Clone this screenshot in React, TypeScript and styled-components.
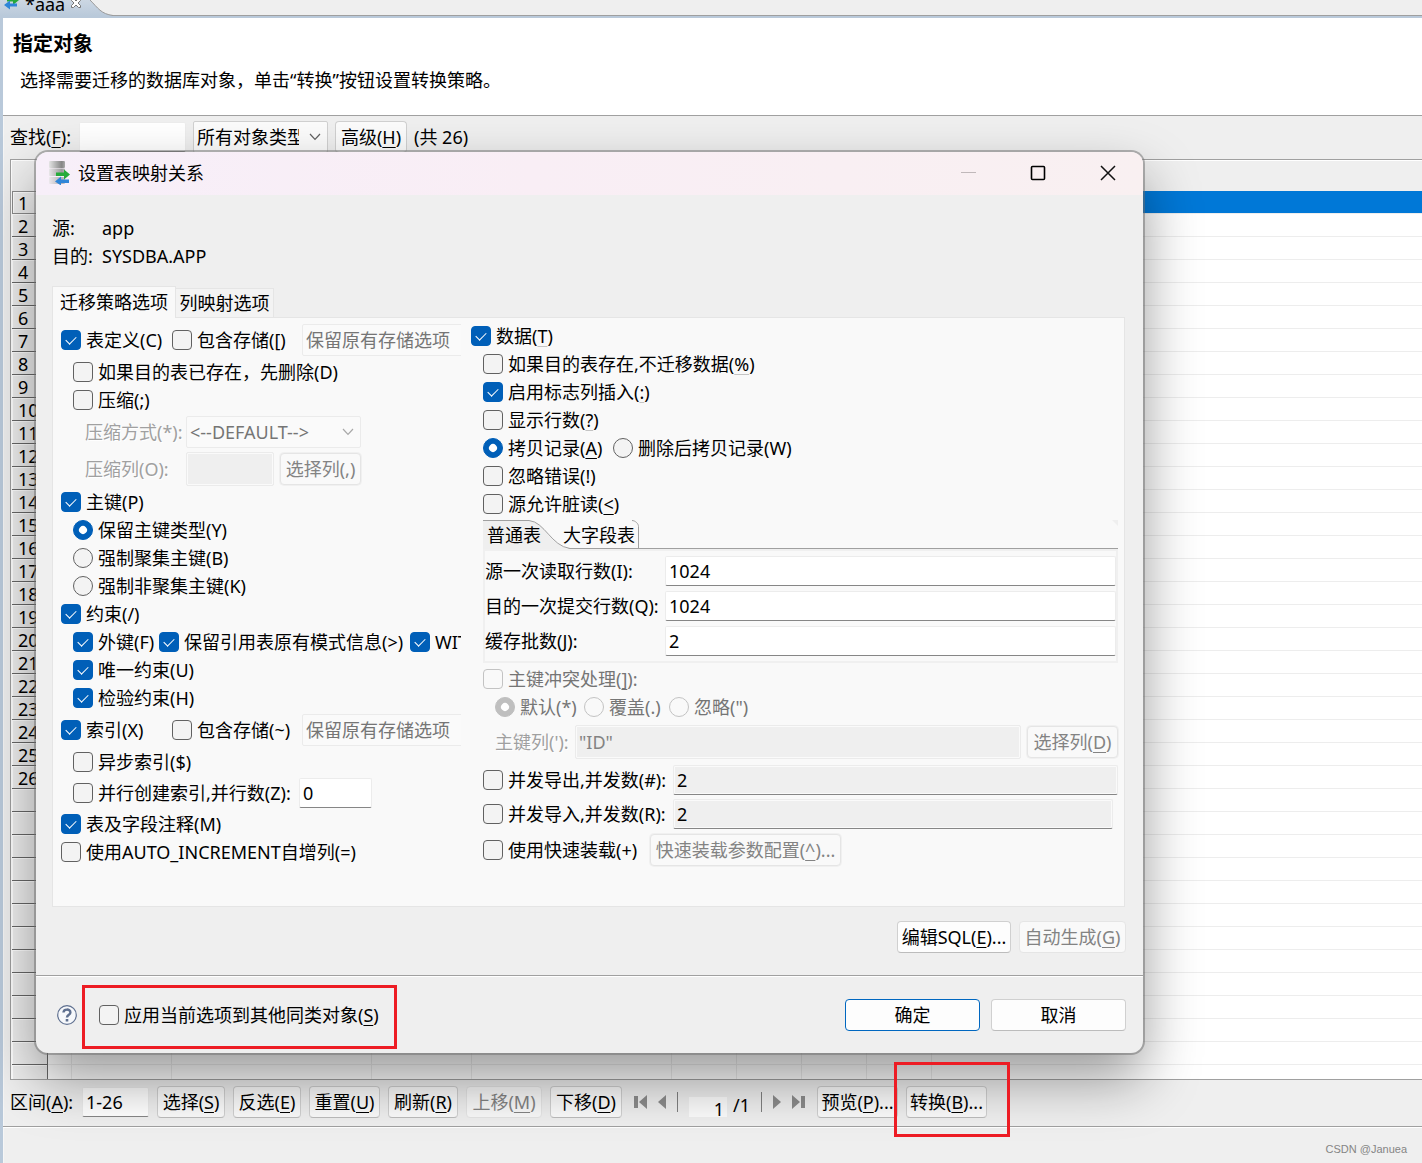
import React, { useId } from "react";
import styled, { createGlobalStyle, css } from "styled-components";

const font = '"Noto Sans", "Noto Sans CJK SC", sans-serif';

const Global = createGlobalStyle`
  *, *::before, *::after { box-sizing: border-box; }
  body { margin: 0; background: #efefef; }
  body, button, input, select { font-family: ${font}; font-size: 18px; line-height: 24px; color: #000; }
  body { overflow-x: hidden; }
`;

/* ---------- shared controls ---------- */

const Key = styled.u<{ $faint?: boolean }>`
  text-decoration: underline;
  text-decoration-thickness: 1px;
  text-underline-offset: 3px;
  text-decoration-color: ${(p) => (p.$faint ? "#c4c4c4" : "currentColor")};
`;

/* "&X" marks the accelerator character, "~~X" marks it with a faint line */
function Caption({ text }: { text: string }) {
  const m = text.match(/^(.*?)(&|~~)(.)(.*)$/);
  if (!m) return <>{text}</>;
  return (
    <>
      {m[1]}
      <Key $faint={m[2] === "~~"}>{m[3]}</Key>
      {m[4]}
    </>
  );
}

const Button = styled.button<{ $w?: number; $primary?: boolean; $framed?: boolean }>`
  flex: none;
  display: flex;
  align-items: center;
  justify-content: center;
  width: ${(p) => (p.$w ? `${p.$w}px` : "auto")};
  height: 32px;
  padding: 0;
  white-space: nowrap;
  background: #fdfdfd;
  border: 1px solid ${(p) => (p.$primary ? "#0067c0" : "#d0d0d0")};
  border-bottom-color: ${(p) => (p.$primary ? "#0067c0" : "#bcbcbc")};
  border-radius: 4px;
  ${(p) => p.$framed && css`box-shadow: 0 0 0 1px #f0f0f0;`}
  &:disabled {
    color: #838383;
    background: #f9f9f9;
    border-color: #e5e5e5;
  }
`;

const BarButton = styled(Button)`
  background: #fbfbfb;
`;

const Field = styled.input<{ $w?: number; $h?: number }>`
  flex: ${(p) => (p.$w ? "none" : "1")};
  width: ${(p) => (p.$w ? `${p.$w}px` : "auto")};
  min-width: 0;
  height: ${(p) => p.$h ?? 30}px;
  padding: 0 3px;
  background: #fff;
  border: 1px solid #ececec;
  border-bottom-color: #868686;
  border-radius: 2px;
  outline: none;
  &:read-only {
    background: #efefef;
    box-shadow: inset 0 0 0 1px #fafafa;
  }
  &:disabled {
    color: #838383;
    background: #efefef;
    border-color: #ebebeb;
    box-shadow: inset 0 0 0 1px #fafafa;
  }
`;

const SelectBox = styled.span<{ $w: number; $h?: number }>`
  position: relative;
  flex: none;
  width: ${(p) => p.$w}px;
  height: ${(p) => p.$h ?? 32}px;
  & > svg {
    position: absolute;
    right: 7px;
    top: 50%;
    margin-top: -4px;
    pointer-events: none;
  }
`;

const Select = styled.select<{ $room: number }>`
  appearance: none;
  width: 100%;
  height: 100%;
  padding: 0 ${(p) => p.$room}px 0 3px;
  background: #fbfbfb;
  border: 1px solid #d0d0d0;
  border-radius: 2px;
  &:disabled {
    color: #757575;
    opacity: 1;
    background: #fafafa;
    border-color: #ebebeb;
  }
`;

function Chevron({ color }: { color: string }) {
  return (
    <svg width="12" height="8" viewBox="0 0 12 8" fill="none" stroke={color} strokeWidth="1.2">
      <path d="M1 1l5 5.4L11 1" />
    </svg>
  );
}

function Dropdown(props: { w: number; label: string; value: string; disabled?: boolean; room?: number }) {
  return (
    <SelectBox $w={props.w}>
      <Select $room={props.room ?? 26} aria-label={props.label} disabled={props.disabled} defaultValue={props.value}>
        <option value={props.value}>{props.value}</option>
      </Select>
      <Chevron color={props.disabled ? "#a8a8a8" : "#606060"} />
    </SelectBox>
  );
}

const ToggleLabel = styled.label<{ $w?: number; $off?: boolean }>`
  flex: none;
  display: flex;
  align-items: center;
  gap: 5px;
  width: ${(p) => (p.$w ? `${p.$w}px` : "auto")};
  white-space: nowrap;
  color: ${(p) => (p.$off ? "#757575" : "#000")};
`;

const Tick = styled.input`
  appearance: none;
  flex: none;
  display: flex;
  align-items: center;
  justify-content: center;
  width: 20px;
  height: 20px;
  margin: 0;
  background: #f3f3f3;
  border: 1px solid #616161;
  border-radius: 4px;
  &:disabled { border-color: #c3c3c3; background: #f9f9f9; }
  &:checked { background: #005fb8; border-color: #005fb8; }
  &:checked::after {
    content: "";
    width: 10px;
    height: 6px;
    margin-top: -3px;
    border: solid #fff;
    border-width: 0 0 1px 1px;
    transform: rotate(-45deg);
  }
`;

const Radio = styled(Tick)`
  border-radius: 50%;
  &:checked::after {
    width: 8px;
    height: 8px;
    margin: 0;
    border: 0;
    border-radius: 50%;
    background: #fff;
  }
  &:checked:disabled { background: #bfbfbf; border-color: #bfbfbf; }
`;

interface ToggleProps {
  text: string;
  w?: number;
  on?: boolean;
  off?: boolean;
}

function Check({ text, w, on, off }: ToggleProps) {
  return (
    <ToggleLabel $w={w} $off={off}>
      <Tick type="checkbox" defaultChecked={on} disabled={off} />
      <span><Caption text={text} /></span>
    </ToggleLabel>
  );
}

function Choice({ text, w, on, off, group }: ToggleProps & { group: string }) {
  return (
    <ToggleLabel $w={w} $off={off}>
      <Radio type="radio" name={group} defaultChecked={on} disabled={off} />
      <span><Caption text={text} /></span>
    </ToggleLabel>
  );
}

const Mark = styled.span<{ $inset: string }>`
  position: absolute;
  inset: ${(p) => p.$inset};
  z-index: 3;
  border: 3px solid #ed1c24;
  pointer-events: none;
`;

const Marked = styled.div`
  position: relative;
  flex: none;
`;

/* ---------- editor page behind the dialog ---------- */

const Page = styled.div`
  position: relative;
  display: flex;
  flex-direction: column;
  min-height: 100vh;
  background: #efefef;
  overflow: hidden;
`;

const TabStrip = styled.div`
  display: flex;
  height: 16px;
  border-bottom: 1px solid #9f9f9f;
  background: #efefef;
`;

const EditorTab = styled.div`
  position: relative;
  display: flex;
  align-items: flex-end;
  gap: 5px;
  width: 114px;
  height: 16px;
  padding: 0 0 0 4px;
  overflow: hidden;
  line-height: 24px;
  & > svg { position: relative; flex: none; }
  & > svg:first-child { position: absolute; left: 0; top: 0; }
  & > span { position: relative; height: 24px; }
`;

const Frame = styled.div`
  flex: 1;
  display: flex;
  flex-direction: column;
  border-left: 3px solid #b9c9da;
  border-top: 2px solid #b9c9da;
  box-shadow: inset 1px 0 0 #f6f6f6;
`;

const Intro = styled.header`
  height: 98px;
  padding: 14px 10px 0;
  background: #fff;
  border-bottom: 1px solid #a0a0a0;
`;

const IntroTitle = styled.h1`
  margin: 0;
  font-size: 20px;
  line-height: 24px;
  font-weight: 700;
`;

const IntroText = styled.p`
  margin: 0;
  padding: 12px 7px 0;
`;

const SearchBar = styled.div`
  display: flex;
  align-items: center;
  gap: 7px;
  height: 43px;
  padding: 0 7px 1px;
`;

const BarLabel = styled.label<{ $w: number }>`
  flex: none;
  width: ${(p) => p.$w}px;
  white-space: nowrap;
`;

const GridBox = styled.div`
  margin-left: 7px;
  height: 921px;
  overflow: hidden;
  background: #fff;
  border: solid #a0a0a0;
  border-width: 1px 0 1px 1px;
`;

const Grid = styled.table`
  width: 100%;
  table-layout: fixed;
  border-spacing: 0;
  border-left: 1px solid #fff;
  th, td { padding: 0; height: 23px; line-height: 20px; font-weight: 400; }
  thead th { height: 31px; background: #efefef; border-top: 1px solid #fff; }
  tbody th {
    padding: 2px 0 0 6px;
    text-align: left;
    background: #efefef;
    border-bottom: 1px solid #686868;
    border-right: 1px solid #686868;
    box-shadow: inset 1px 1px 0 #fff;
    overflow: hidden;
  }
  tbody td { border: solid #ededed; border-width: 0 1px 1px 0; }
  tbody td:last-child { border-right: 0; }
`;

const GridRow = styled.tr<{ $selected?: boolean }>`
  ${(p) => p.$selected && css`
    td { background: #0078d7; border-color: #0078d7; }
    && th { border: 1px solid #8c8c8c; padding: 1px 0 0 5px; }
  `}
`;

const columns = [36, 24, 100, 200, 100, 200, 65, 65, 65, 65];

const PageBar = styled.div`
  display: flex;
  align-items: center;
  gap: 8px;
  height: 47px;
  padding: 0 0 2px 7px;
  border-bottom: 1px solid #a0a0a0;
  box-shadow: 0 1px 0 #fff;
`;

const Pager = styled.div`
  display: flex;
  align-items: center;
  width: 179px;
  height: 32px;
  padding-left: 4px;
  gap: 11px;
`;

const PagerButton = styled.button`
  display: flex;
  padding: 0;
  border: 0;
  background: none;
`;

const Divider = styled.span`
  width: 1px;
  height: 20px;
  background: #808080;
`;

const PageNumber = styled.div`
  display: flex;
  align-items: flex-end;
  gap: 6px;
  padding-top: 6px;
`;

const PageInput = styled(Field)`
  padding: 4px 3px 0;
  border: 0;
  border-radius: 0;
  text-align: right;
  background: #fbfbfb;
`;

const Credit = styled.footer`
  padding: 10px 15px 0;
  text-align: right;
  font-family: "Liberation Sans", sans-serif;
  font-size: 11px;
  line-height: 24px;
  color: #858585;
`;

/* ---------- dialog ---------- */

const Dialog = styled.section`
  position: absolute;
  left: 36px;
  top: 152px;
  z-index: 2;
  width: 1107px;
  background: #efefef;
  border-radius: 12px;
  box-shadow: 0 0 0 2px rgba(110, 110, 110, 0.5), 0 26px 56px rgba(0, 0, 0, 0.4);
`;

const TitleBar = styled.div`
  display: flex;
  align-items: center;
  height: 43px;
  padding: 0 0 2px 13px;
  border-radius: 12px 12px 0 0;
  background: linear-gradient(90deg, #f7eff9, #f9eef5 45%, #f9f0f1);
`;

const DialogTitle = styled.h2`
  flex: 1;
  margin: 0 8px;
  font-size: 18px;
  font-weight: 400;
`;

const WindowButton = styled.button`
  display: flex;
  align-items: center;
  justify-content: center;
  width: 70px;
  height: 41px;
  padding: 0;
  border: 0;
  background: none;
`;

const DialogBody = styled.div`
  padding: 19px 17px 0 16px;
`;

const Facts = styled.dl`
  display: grid;
  grid-template-columns: 50px 1fr;
  grid-auto-rows: 28px;
  align-items: center;
  margin: 0;
  & > dd { margin: 0; }
`;

const Tabs = styled.div`
  display: flex;
  align-items: flex-end;
  height: 47px;
`;

const Tab = styled.button<{ $active?: boolean }>`
  width: ${(p) => (p.$active ? 124 : 98)}px;
  height: ${(p) => (p.$active ? 32 : 29)}px;
  margin-bottom: ${(p) => (p.$active ? -1 : 0)}px;
  padding: 0 0 ${(p) => (p.$active ? 2 : 0)}px;
  background: ${(p) => (p.$active ? "#f9f9f9" : "#f3f3f3")};
  border: 1px solid #e5e5e5;
  border-bottom: 0;
  ${(p) => !p.$active && css`border-left: 0;`}
`;

const Panel = styled.div`
  display: flex;
  gap: 10px;
  min-height: 590px;
  margin-right: 1px;
  padding: 6px 6px 6px 8px;
  background: #f9f9f9;
  border: 1px solid #e5e5e5;
`;

const Column = styled.div<{ $fixed?: boolean }>`
  display: flex;
  flex-direction: column;
  gap: 4px;
  min-width: 0;
  ${(p) => (p.$fixed ? css`flex: none; width: 400px; overflow: hidden;` : css`flex: 1;`)}
`;

const Row = styled.div<{ $h?: number; $indent?: number; $end?: number }>`
  display: flex;
  align-items: center;
  flex: none;
  height: ${(p) => p.$h ?? 24}px;
  padding-left: ${(p) => (p.$indent ?? 0) * 12}px;
  padding-right: ${(p) => p.$end ?? 0}px;
`;

const Dim = styled.label<{ $w: number }>`
  flex: none;
  width: ${(p) => p.$w}px;
  white-space: nowrap;
  color: #a0a0a0;
  text-shadow: 1px 1px 0 #fff;
`;

const Spaced = styled.span`
  display: flex;
  align-items: center;
  flex: 1;
  gap: 6px;
`;

const Folder = styled.div`
  margin-left: 12px;
`;

const FolderTabs = styled.div`
  position: relative;
  display: flex;
  height: 29px;
  border-bottom: 1px solid #a0a0a0;
  & > svg { position: absolute; top: 0; }
  & > svg:first-child { left: 0; }
  & > svg:last-child { right: 0; }
`;

const FolderTab = styled.button<{ $active?: boolean }>`
  position: relative;
  width: ${(p) => (p.$active ? 76 : 80)}px;
  padding: 2px 4px 0;
  text-align: left;
  white-space: nowrap;
  background: none;
  border: 0;
`;

const FolderBody = styled.div`
  display: grid;
  grid-template-columns: 180px 1fr;
  grid-auto-rows: 30px;
  gap: 5px 0;
  align-items: center;
  padding: 5px 0;
  border: 2px solid #f0f0f0;
  & > label { white-space: nowrap; }
`;

const Extras = styled.div`
  display: flex;
  justify-content: flex-end;
  gap: 8px;
  padding: 14px 0 22px;
`;

const DialogFooter = styled.div`
  display: flex;
  align-items: center;
  height: 78px;
  padding: 1px 17px 0 21px;
  border-top: 1px solid #a0a0a0;
  box-shadow: inset 0 1px 0 #fff;
`;

const HelpButton = styled.button`
  display: flex;
  margin-right: 22px;
  padding: 0;
  border: 0;
  background: none;
`;

const Answers = styled.div`
  display: flex;
  gap: 11px;
  margin-left: auto;
`;

function SyncArrows() {
  return (
    <svg width="16" height="16" viewBox="0 6 16 16">
      <path d="M3 4.500h6V1l6 5-6 5V7.500H3z" fill="#27a93a" />
      <path d="M13 9.500H6V6.500L0 11l6 4.500v-3h7z" fill="#2f86d8" />
    </svg>
  );
}

function MigrationIcon() {
  return (
    <svg width="21" height="24" viewBox="0 0 21 24">
      <defs>
        <linearGradient id="disk" x1="0" x2="1">
          <stop offset="0" stopColor="#e4e4e4" />
          <stop offset="0.8" stopColor="#858585" />
          <stop offset="1" stopColor="#a9a9a9" />
        </linearGradient>
      </defs>
      <rect x="0" y="0" width="16" height="7" rx="1" fill="url(#disk)" />
      <rect x="0" y="7.500" width="16" height="7.500" rx="1" fill="url(#disk)" opacity="0.8" />
      <rect x="0" y="16" width="16" height="7" rx="1" fill="url(#disk)" opacity="0.6" />
      <path d="M7 11.500h8V8.500l6 5-6 5v-3.500H7z" fill="#27ab3b" />
      <path d="M20 18.500h-8v-3l-6 5 6 4v-2.500h8z" fill="#2f86d8" />
    </svg>
  );
}

function NumberRow({ text, w, end }: { text: string; w: number; end?: number }) {
  return (
    <Row $h={30} $indent={1} $end={end}>
      <Check text={text} w={w} />
      <Field readOnly defaultValue="2" aria-label={text} />
    </Row>
  );
}

function BatchField({ label, value }: { label: string; value: string }) {
  const id = useId();
  return (
    <>
      <label htmlFor={id}>{label}</label>
      <Field id={id} defaultValue={value} />
    </>
  );
}

function SchemaColumn() {
  return (
    <Column $fixed>
      <Row $h={32}>
        <Check text="表定义(C)" w={111} on />
        <Check text="包含存储([)" w={130} />
        <Dropdown w={190} label="表存储选项" value="保留原有存储选项" disabled />
      </Row>
      <Row $indent={1}><Check text="如果目的表已存在，先删除(D)" /></Row>
      <Row $indent={1}><Check text="压缩(;)" /></Row>
      <Row $h={32} $indent={2}>
        <Dim $w={101} as="span">压缩方式(*):</Dim>
        <Dropdown w={175} label="压缩方式" value="<--DEFAULT-->" disabled />
      </Row>
      <Row $h={34} $indent={2}>
        <Dim $w={101} htmlFor="zip-column">压缩列(O):</Dim>
        <Spaced>
          <Field id="zip-column" $w={88} $h={34} disabled />
          <Button $w={81} $framed disabled>选择列(,)</Button>
        </Spaced>
      </Row>
      <Row><Check text="主键(P)" on /></Row>
      <Row $indent={1}><Choice group="pk" text="保留主键类型(Y)" on /></Row>
      <Row $indent={1}><Choice group="pk" text="强制聚集主键(B)" /></Row>
      <Row $indent={1}><Choice group="pk" text="强制非聚集主键(K)" /></Row>
      <Row><Check text="约束(/)" on /></Row>
      <Row $indent={1}>
        <Check text="外键(F)" w={86} on />
        <Check text="保留引用表原有模式信息(>)" w={251} on />
        <Check text="WITH" on />
      </Row>
      <Row $indent={1}><Check text="唯一约束(U)" on /></Row>
      <Row $indent={1}><Check text="检验约束(H)" on /></Row>
      <Row $h={32}>
        <Check text="索引(X)" w={111} on />
        <Check text="包含存储(~)" w={130} />
        <Dropdown w={190} label="索引存储选项" value="保留原有存储选项" disabled />
      </Row>
      <Row $indent={1}><Check text="异步索引($)" /></Row>
      <Row $h={30} $indent={1}>
        <Check text="并行创建索引,并行数(Z):" w={226} />
        <Field $w={73} defaultValue="0" aria-label="并行数" />
      </Row>
      <Row><Check text="表及字段注释(M)" on /></Row>
      <Row><Check text="使用AUTO_INCREMENT自增列(=)" /></Row>
    </Column>
  );
}

function DataColumn() {
  return (
    <Column>
      <Row><Check text="数据(~~T)" on /></Row>
      <Row $indent={1}><Check text="如果目的表存在,不迁移数据(~~%)" /></Row>
      <Row $indent={1}><Check text="启用标志列插入(~~:)" on /></Row>
      <Row $indent={1}><Check text="显示行数(~~?)" /></Row>
      <Row $indent={1}>
        <Choice group="copy" text="拷贝记录(&A)" w={130} on />
        <Choice group="copy" text="删除后拷贝记录(W)" />
      </Row>
      <Row $indent={1}><Check text="忽略错误(!)" /></Row>
      <Row $indent={1}><Check text="源允许脏读(&<)" /></Row>
      <Folder>
        <FolderTabs role="tablist">
          <svg width="157" height="29" viewBox="0 0 157 29" fill="none" stroke="#a0a0a0">
            <path d="M0 0.500H48C62 2 66 26 87 28.500V29H0z" fill="#efefef" stroke="none" />
            <path d="M0 0.500H46C62 2 68 26 87 28.500" />
            <path d="M149 0.500c3 0 6.500 3 6.500 6V28" />
          </svg>
          <FolderTab $active role="tab" aria-selected>普通表</FolderTab>
          <FolderTab role="tab" aria-selected={false}>大字段表</FolderTab>
          <svg width="6" height="6" viewBox="0 0 6 6"><path d="M0 0h6v6z" fill="#efefef" /></svg>
        </FolderTabs>
        <FolderBody>
          <BatchField label="源一次读取行数(I):" value="1024" />
          <BatchField label="目的一次提交行数(Q):" value="1024" />
          <BatchField label="缓存批数(J):" value="2" />
        </FolderBody>
      </Folder>
      <Row $indent={1}><Check text="主键冲突处理(&]):" off /></Row>
      <Row $indent={2}>
        <Choice group="conflict" text="默认(*)" w={89} on off />
        <Choice group="conflict" text="覆盖(.)" w={85} off />
        <Choice group="conflict" text={'忽略(")'} off />
      </Row>
      <Row $h={38} $indent={2}>
        <Dim $w={80} htmlFor="pk-column">主键列('):</Dim>
        <Spaced>
          <Field id="pk-column" $h={34} defaultValue={'"ID"'} disabled />
          <Button $w={91} $framed disabled><span><Caption text="选择列(&D)" /></span></Button>
        </Spaced>
      </Row>
      <NumberRow text="并发导出,并发数(#):" w={190} />
      <NumberRow text="并发导入,并发数(R):" w={190} end={5} />
      <Row $h={34} $indent={1}>
        <Check text="使用快速装载(+)" w={167} />
        <Button $w={191} $framed disabled><span><Caption text="快速装载参数配置(&^)..." /></span></Button>
      </Row>
    </Column>
  );
}

function MappingDialog() {
  return (
    <Dialog role="dialog" aria-labelledby="mapping-title">
      <TitleBar>
        <MigrationIcon />
        <DialogTitle id="mapping-title">设置表映射关系</DialogTitle>
        <WindowButton aria-label="最小化" disabled>
          <svg width="15" height="15" stroke="#c0b8ba"><path d="M0 7.500h15" /></svg>
        </WindowButton>
        <WindowButton aria-label="最大化">
          <svg width="16" height="16" fill="none" stroke="#000" strokeWidth="1.6">
            <rect x="1.500" y="1.500" width="13" height="13" rx="1" />
          </svg>
        </WindowButton>
        <WindowButton aria-label="关闭">
          <svg width="16" height="16" stroke="#111" strokeWidth="1.500"><path d="M1 1l14 14M15 1L1 15" /></svg>
        </WindowButton>
      </TitleBar>
      <DialogBody>
        <Facts>
          <dt>源:</dt><dd>app</dd>
          <dt>目的:</dt><dd>SYSDBA.APP</dd>
        </Facts>
        <Tabs role="tablist">
          <Tab $active role="tab" aria-selected>迁移策略选项</Tab>
          <Tab role="tab" aria-selected={false}>列映射选项</Tab>
        </Tabs>
        <Panel role="tabpanel">
          <SchemaColumn />
          <DataColumn />
        </Panel>
        <Extras>
          <Button $w={114}><span><Caption text="编辑SQL(&E)..." /></span></Button>
          <Button $w={107} disabled><span><Caption text="自动生成(&G)" /></span></Button>
        </Extras>
      </DialogBody>
      <DialogFooter>
        <HelpButton aria-label="帮助">
          <svg width="20" height="20" viewBox="0 0 20 20" fill="none" stroke="#5f7090">
            <circle cx="10" cy="10" r="9.300" fill="#f6f8fb" strokeWidth="1.200" />
            <path d="M6.500 7.600C6.500 3.600 13.400 3.600 13.400 7.400C13.400 9.800 10 9.800 10 12.600" strokeWidth="2.400" />
            <path d="M10 14v2.500" strokeWidth="2.600" />
          </svg>
        </HelpButton>
        <Marked>
          <Check text="应用当前选项到其他同类对象(&S)" />
          <Mark $inset="-18px -18px -22px -17px" />
        </Marked>
        <Answers>
          <Button $w={135} $primary>确定</Button>
          <Button $w={135}>取消</Button>
        </Answers>
      </DialogFooter>
    </Dialog>
  );
}

function ObjectGrid() {
  const rows = Array.from({ length: 39 }, (_, i) => i + 1);
  return (
    <GridBox>
      <Grid>
        <colgroup>
          {columns.map((w, i) => <col key={i} width={w} />)}
          <col />
        </colgroup>
        <thead>
          <tr><th colSpan={columns.length + 1} /></tr>
        </thead>
        <tbody>
          {rows.map((n) => (
            <GridRow key={n} $selected={n === 1}>
              <th scope="row">{n <= 26 ? n : ""}</th>
              {columns.map((_, i) => <td key={i} />)}
            </GridRow>
          ))}
        </tbody>
      </Grid>
    </GridBox>
  );
}

const nav = "#8c8c8c";

export default function App() {
  return (
    <Page lang="zh-CN">
      <Global />
      <TabStrip>
        <EditorTab>
          <svg width="114" height="16" viewBox="0 0 114 16">
            <defs>
              <linearGradient id="tab" x1="0" y1="0" x2="0" y2="1">
                <stop offset="0" stopColor="#ccd7e3" />
                <stop offset="1" stopColor="#b9c9da" />
              </linearGradient>
            </defs>
            <path d="M0 0H90C98 8 101 14 113 15.500V16H0z" fill="url(#tab)" />
            <path d="M90 0C98 8 101 14 113 15.500" fill="none" stroke="#9a9a9a" />
          </svg>
          <SyncArrows />
          <span>*aaa</span>
          <svg width="12" height="16" viewBox="0 0 12 16" fill="#fff" stroke="#777">
            <path d="M1.500 -1.500h2L6 1l2.500-2.500h2v2L8 3l2.500 2.500v2h-2L6 5 3.500 7.500h-2v-2L4 3 1.500.5z" />
          </svg>
        </EditorTab>
      </TabStrip>
      <Frame>
        <Intro>
          <IntroTitle>指定对象</IntroTitle>
          <IntroText>选择需要迁移的数据库对象，单击“转换”按钮设置转换策略。</IntroText>
        </Intro>
        <SearchBar>
          <BarLabel $w={62} htmlFor="find"><Caption text="查找(&F):" /></BarLabel>
          <Field id="find" $w={107} />
          <Dropdown w={135} label="对象类型" value="所有对象类型" room={28} />
          <BarButton $w={72}><span><Caption text="高级(&H)" /></span></BarButton>
          <span>(共 26)</span>
        </SearchBar>
        <ObjectGrid />
        <PageBar>
          <BarLabel $w={64} htmlFor="range"><Caption text="区间(&A):" /></BarLabel>
          <Field id="range" $w={67} defaultValue="1-26" />
          <BarButton $w={68}><span><Caption text="选择(&S)" /></span></BarButton>
          <BarButton $w={68}><span><Caption text="反选(&E)" /></span></BarButton>
          <BarButton $w={71}><span><Caption text="重置(&U)" /></span></BarButton>
          <BarButton $w={70}><span><Caption text="刷新(&R)" /></span></BarButton>
          <BarButton $w={76} disabled><span><Caption text="上移(&M)" /></span></BarButton>
          <BarButton $w={72}><span><Caption text="下移(&D)" /></span></BarButton>
          <Pager>
            <PagerButton aria-label="首页">
              <svg width="13" height="14" fill={nav}><path d="M0 1h4v12H0zM13 0v14L5 7z" /></svg>
            </PagerButton>
            <PagerButton aria-label="上一页">
              <svg width="8" height="14" fill={nav}><path d="M8 0v14L0 7z" /></svg>
            </PagerButton>
            <Divider />
            <PageNumber>
              <PageInput $w={38} $h={20} defaultValue="1" aria-label="页码" />
              <span>/1</span>
            </PageNumber>
            <Divider />
            <PagerButton aria-label="下一页">
              <svg width="8" height="14" fill={nav}><path d="M0 0v14l8-7z" /></svg>
            </PagerButton>
            <PagerButton aria-label="末页">
              <svg width="13" height="14" fill={nav}><path d="M9 1h4v12H9zM0 0v14l8-7z" /></svg>
            </PagerButton>
          </Pager>
          <BarButton $w={81}><span><Caption text="预览(&P)..." /></span></BarButton>
          <Marked>
            <BarButton $w={81}><span><Caption text="转换(&B)..." /></span></BarButton>
            <Mark $inset="-24px -23px -19px -12px" />
          </Marked>
        </PageBar>
        <Credit>CSDN @Januea</Credit>
      </Frame>
      <MappingDialog />
    </Page>
  );
}
